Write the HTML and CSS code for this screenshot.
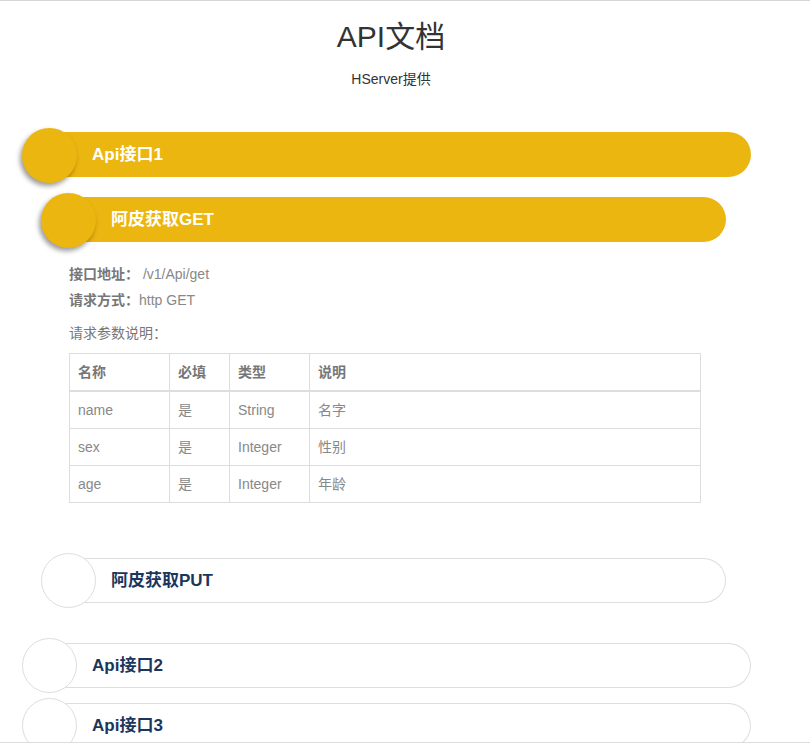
FILE: index.html
```html
<!DOCTYPE html>
<html lang="zh-CN">
<head>
    <meta charset="UTF-8">
    <meta name="viewport" content="width=device-width, initial-scale=1.0">
    <title>API文档</title>
    <link rel="stylesheet" href="styles.css">
</head>
<body>
    <div class="header">
        <h1>API文档</h1>
        <p>HServer提供</p>
    </div>

    <div class="apis">
        <!-- group 1 -->
        <div class="group open">
            <div class="head">
                <div class="dot"></div>
                <div class="bar">Api接口1</div>
            </div>

            <div class="method open">
                <div class="head">
                    <div class="dot"></div>
                    <div class="bar">阿皮获取GET</div>
                </div>
                <div class="detail">
                    <div class="line"><b>接口地址：</b> /v1/Api/get</div>
                    <div class="line"><b>请求方式：</b>http GET</div>
                    <p class="params-title">请求参数说明：</p>
                    <table class="params">
                        <thead>
                            <tr>
                                <th class="col-name">名称</th>
                                <th class="col-need">必填</th>
                                <th class="col-type">类型</th>
                                <th>说明</th>
                            </tr>
                        </thead>
                        <tbody>
                            <tr><td>name</td><td>是</td><td>String</td><td>名字</td></tr>
                            <tr><td>sex</td><td>是</td><td>Integer</td><td>性别</td></tr>
                            <tr><td>age</td><td>是</td><td>Integer</td><td>年龄</td></tr>
                        </tbody>
                    </table>
                </div>
            </div>

            <div class="method">
                <div class="head">
                    <div class="dot"></div>
                    <div class="bar">阿皮获取PUT</div>
                </div>
            </div>
        </div>

        <!-- group 2 -->
        <div class="group">
            <div class="head">
                <div class="dot"></div>
                <div class="bar">Api接口2</div>
            </div>
        </div>

        <!-- group 3 -->
        <div class="group">
            <div class="head">
                <div class="dot"></div>
                <div class="bar">Api接口3</div>
            </div>
        </div>
    </div>

    <div class="footer"></div>
</body>
</html>
```

FILE: styles.css
```css
* {
    box-sizing: border-box;
}

body {
    font-family: "Liberation Sans", Arial, "Noto Sans CJK SC", sans-serif;
    font-size: 14px;
    line-height: 20px;
    color: #333;
    margin: 0;
    padding: 0;
    border-top: 1px solid #d6d6d6;
}

.header {
    text-align: center;
    padding-right: 28px;
}

.header h1 {
    font-size: 30px;
    font-weight: normal;
    line-height: 33px;
    margin: 19px 0 0;
}

.header p {
    margin: 16px 0 0;
}

.apis {
    padding: 0 59px 0 22px;
    margin-top: 39px;
}

.group {
    margin-bottom: 5px;
}

.group.open {
    margin-bottom: 30px;
}

.head {
    display: flex;
    align-items: center;
    height: 55px;
}

.dot {
    position: relative;
    z-index: 1;
    flex-shrink: 0;
    width: 55px;
    height: 55px;
    border-radius: 50%;
    background-color: #fff;
    border: 1px solid #ddd;
}

.bar {
    flex: 1;
    height: 45px;
    margin-left: -27px;
    padding-left: 42px;
    display: flex;
    align-items: center;
    font-size: 17px;
    font-weight: bold;
    color: #1b365d;
    background-color: #fff;
    border: 1px solid #ddd;
    border-left: none;
    border-radius: 0 23px 23px 0;
}

.open > .head .dot {
    background-color: #ecb610;
    border: none;
    box-shadow: -2px 3px 5px rgba(0, 0, 0, 0.4);
}

.open > .head .bar {
    margin-bottom: 2px;
    background-color: #ecb610;
    border: none;
    color: #fff;
}

.method {
    margin: 10px 25px 0 19px;
}

.method.open {
    margin-bottom: 50px;
}

.detail {
    padding: 13px 25px 0 28px;
    color: #888;
}

.detail .line {
    line-height: 26px;
}

.detail b {
    color: #777;
}

.params-title {
    margin: 10px 0 10px;
    color: #777;
}

.params {
    width: 100%;
    border-collapse: collapse;
    border: 1px solid #ddd;
}

.params th,
.params td {
    padding: 8px;
    text-align: left;
    border: 1px solid #ddd;
    line-height: 20px;
}

.params th {
    color: #777;
    border-bottom-width: 2px;
}

.col-name {
    width: 100px;
}

.col-need {
    width: 60px;
}

.col-type {
    width: 80px;
}

.footer {
    position: fixed;
    left: 0;
    right: 0;
    bottom: 0;
    height: 6px;
    background-color: #fff;
    border-top: 1px solid #ddd;
    z-index: 5;
}
```
